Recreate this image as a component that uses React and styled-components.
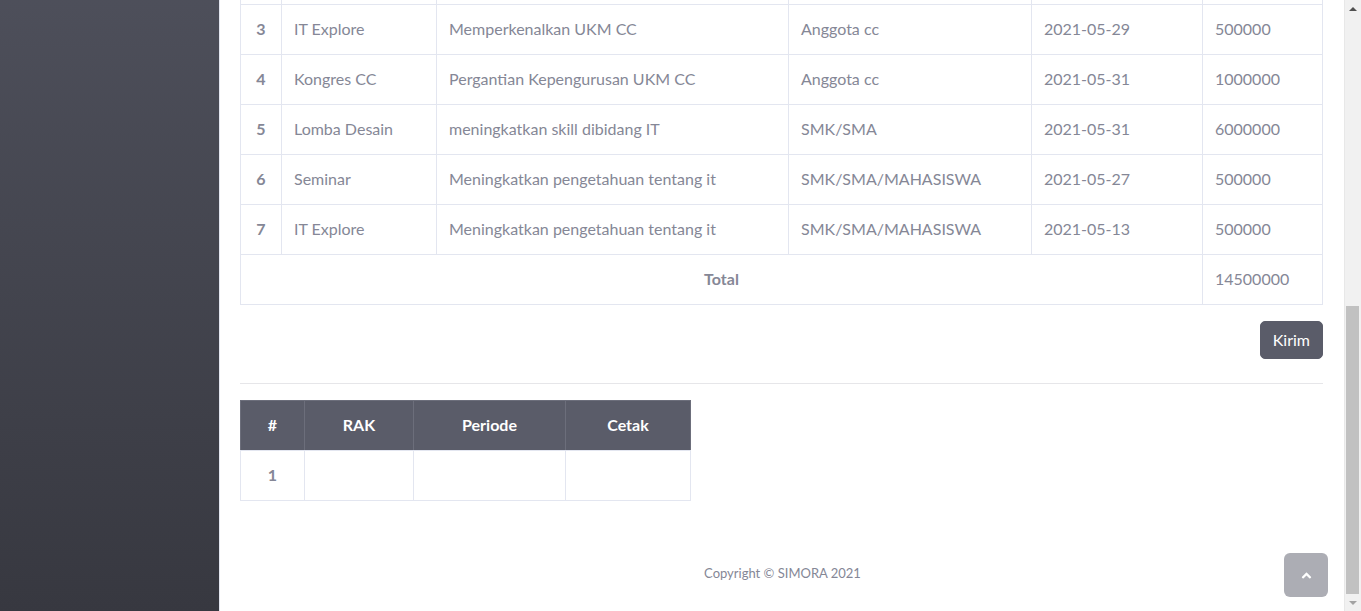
import React, { useLayoutEffect } from "react";
import styled, { createGlobalStyle } from "styled-components";
import { FaAngleUp } from "react-icons/fa";

const GlobalStyle = createGlobalStyle`
  html, body {
    margin: 0;
    padding: 0;
  }
  body {
    font-family: Lato, "Noto Sans", sans-serif;
    font-size: 16px;
    color: #858796;
    background: #fff;
  }
  * {
    box-sizing: border-box;
  }
`;

const rows = [
  ["1", "Webinar", "Pengenalan dunia pemrograman", "Mahasiswa", "2021-05-20", "3000000"],
  ["2", "Workshop", "Pelatihan desain grafis", "Anggota cc", "2021-05-22", "3000000"],
  ["3", "IT Explore", "Memperkenalkan UKM CC", "Anggota cc", "2021-05-29", "500000"],
  ["4", "Kongres CC", "Pergantian Kepengurusan UKM CC", "Anggota cc", "2021-05-31", "1000000"],
  ["5", "Lomba Desain", "meningkatkan skill dibidang IT", "SMK/SMA", "2021-05-31", "6000000"],
  ["6", "Seminar", "Meningkatkan pengetahuan tentang it", "SMK/SMA/MAHASISWA", "2021-05-27", "500000"],
  ["7", "IT Explore", "Meningkatkan pengetahuan tentang it", "SMK/SMA/MAHASISWA", "2021-05-13", "500000"],
];

export default function App() {
  useLayoutEffect(() => {
    window.scrollTo(0, document.documentElement.scrollHeight);
  }, []);

  return (
    <>
      <GlobalStyle />
      <Wrapper>
        <Sidebar>
          <Brand>SIMORA</Brand>
        </Sidebar>
        <Content>
          <Topbar>
            <UserName>Admin UKM CC</UserName>
          </Topbar>
          <Container>
            <PageTitle>Laporan Pertanggungjawaban</PageTitle>
            <Info>
              <InfoLine>Nama UKM : UKM CC</InfoLine>
              <InfoLine>Periode : 2021</InfoLine>
              <InfoLine>Ketua : -</InfoLine>
            </Info>
            <SectionTitle>Rencana Anggaran Kegiatan</SectionTitle>

            <Table>
              <colgroup>
                <Col $w={41} />
                <Col $w={155} />
                <Col $w={352} />
                <Col $w={243} />
                <Col $w={171} />
                <Col />
              </colgroup>
              <thead>
                <tr>
                  <Th>#</Th>
                  <Th>Kegiatan</Th>
                  <Th>Tujuan</Th>
                  <Th>Sasaran</Th>
                  <Th>Tanggal</Th>
                  <Th>Biaya</Th>
                </tr>
              </thead>
              <tbody>
                {rows.map((r) => (
                  <tr key={r[0]}>
                    <Td $bold $center>{r[0]}</Td>
                    {r.slice(1).map((c, i) => (
                      <Td key={i}>{c}</Td>
                    ))}
                  </tr>
                ))}
                <tr>
                  <Td colSpan={5} $bold $center>Total</Td>
                  <Td>14500000</Td>
                </tr>
              </tbody>
            </Table>

            <Actions>
              <Button>Kirim</Button>
            </Actions>

            <Divider />

            <SmallTable>
              <colgroup>
                <Col $w={64} />
                <Col $w={109} />
                <Col $w={152} />
                <Col $w={125} />
              </colgroup>
              <thead>
                <tr>
                  <Th>#</Th>
                  <Th>RAK</Th>
                  <Th>Periode</Th>
                  <Th>Cetak</Th>
                </tr>
              </thead>
              <tbody>
                <tr>
                  <Td $bold $center>1</Td>
                  <Td />
                  <Td />
                  <Td />
                </tr>
              </tbody>
            </SmallTable>
          </Container>
          <Footer>Copyright © SIMORA 2021</Footer>
        </Content>
      </Wrapper>
      <ScrollTop href="#top">
        <FaAngleUp size={15} />
      </ScrollTop>
      <ScrollTrack>
        <Arrow $up $active />
        <Thumb />
        <Arrow />
      </ScrollTrack>
    </>
  );
}

const Wrapper = styled.div`
  display: flex;
  min-height: 100vh;
  padding-right: 16px;
`;

const Sidebar = styled.aside`
  width: 219px;
  flex-shrink: 0;
  background: linear-gradient(180deg, #5a5c69 10%, #373840 100%);
`;

const Brand = styled.div`
  height: 70px;
  display: flex;
  align-items: center;
  justify-content: center;
  color: #fff;
  font-weight: 800;
  letter-spacing: 0.05rem;
`;

const Content = styled.main`
  flex: 1;
  min-width: 0;
  display: flex;
  flex-direction: column;
  border-left: 1px solid #e3e6f0;
  background: #fff;
`;

const Topbar = styled.nav`
  height: 70px;
  margin-bottom: 24px;
  display: flex;
  align-items: center;
  justify-content: flex-end;
  padding: 0 24px;
  box-shadow: 0 0.15rem 1.75rem 0 rgba(58, 59, 69, 0.15);
`;

const UserName = styled.span`
  font-size: 13px;
`;

const Container = styled.div`
  flex: 1;
  padding: 0 22px 30px 20px;
`;

const PageTitle = styled.h1`
  margin: 0 0 24px;
  font-size: 28px;
  font-weight: 400;
  line-height: 34px;
  color: #5a5c69;
`;

const Info = styled.div`
  display: flex;
  flex-direction: column;
  gap: 8px;
  margin-bottom: 24px;
`;

const InfoLine = styled.div`
  line-height: 24px;
`;

const SectionTitle = styled.h5`
  margin: 0 0 21px;
  font-size: 20px;
  line-height: 24px;
  font-weight: 700;
  color: #5a5c69;
`;

const Table = styled.table`
  width: 100%;
  table-layout: fixed;
  border-collapse: collapse;
`;

const SmallTable = styled(Table)`
  width: 451px;
`;

const Col = styled.col`
  width: ${(p) => (p.$w ? `${p.$w}px` : "auto")};
`;

const Th = styled.th`
  background: #5a5c69;
  color: #fff;
  font-weight: 700;
  text-align: center;
  padding: 12px 12px 13px;
  line-height: 24px;
  border: 1px solid #6c6e7b;
  border-bottom-color: #e3e6f0;
`;

const Td = styled.td`
  padding: 12px 12px 13px;
  line-height: 24px;
  border: 1px solid #e3e6f0;
  white-space: nowrap;
  font-weight: ${(p) => (p.$bold ? 700 : 400)};
  text-align: ${(p) => (p.$center ? "center" : "left")};
`;

const Actions = styled.div`
  display: flex;
  justify-content: flex-end;
  margin-top: 16px;
`;

const Button = styled.button`
  font-family: inherit;
  font-size: 16px;
  line-height: 24px;
  padding: 6px 12px;
  border: 1px solid #5a5c69;
  border-radius: 5px;
  background: #5a5c69;
  color: #fff;
  cursor: pointer;
`;

const Divider = styled.hr`
  margin: 24px 0 16px;
  border: 0;
  border-top: 1px solid #e6e6e9;
`;

const Footer = styled.footer`
  padding: 32px 0 28px;
  text-align: center;
  font-size: 13px;
  line-height: 20px;
  color: #858796;
`;

const ScrollTop = styled.a`
  position: fixed;
  right: 33px;
  bottom: 14px;
  width: 44px;
  height: 44px;
  display: flex;
  align-items: center;
  justify-content: center;
  border-radius: 6px;
  background: rgba(90, 92, 105, 0.5);
  color: #fff;
`;

/* drawn browser scrollbar, page scrolled to the bottom */
const ScrollTrack = styled.div`
  position: fixed;
  top: 0;
  right: 0;
  bottom: 0;
  width: 17px;
  display: flex;
  flex-direction: column;
  background: #f1f1f1;
  border-left: 1px solid #e8e8e8;
`;

const Arrow = styled.div`
  height: 17px;
  flex-shrink: 0;
  display: flex;
  justify-content: center;
  align-items: center;
  &::before {
    content: "";
    border-left: 4px solid transparent;
    border-right: 4px solid transparent;
    ${(p) =>
      p.$up
        ? `border-bottom: 4px solid ${p.$active ? "#505050" : "#a3a3a3"};`
        : `border-top: 4px solid ${p.$active ? "#505050" : "#a3a3a3"};`}
  }
`;

const Thumb = styled.div`
  margin: auto 2px 0 1px;
  height: 288px;
  background: #c1c1c1;
`;
